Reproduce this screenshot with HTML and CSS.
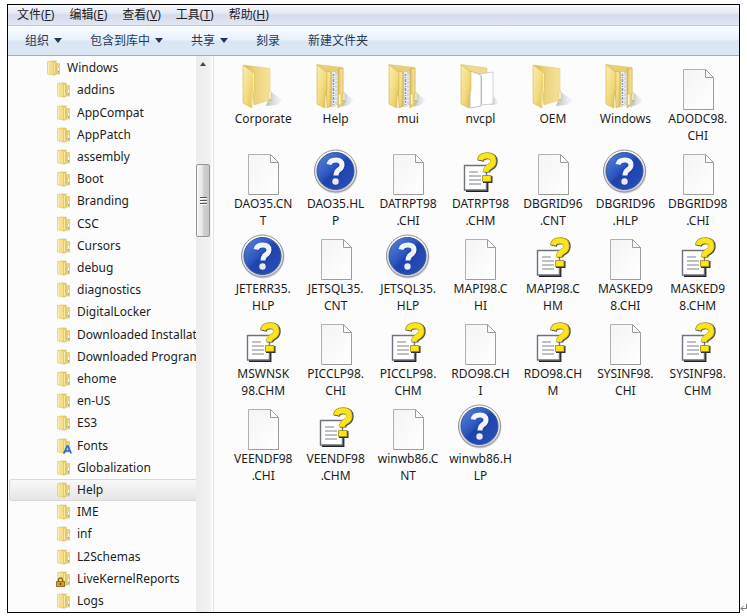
FILE: index.html
```html
<!DOCTYPE html>
<html lang="zh-CN">
<head>
<meta charset="utf-8">
<title>Help</title>
<link rel="stylesheet" href="styles.css">
</head>
<body>
<svg class="defs" aria-hidden="true">
  <defs>
    <linearGradient id="flap" x1="0" y1="0" x2="1" y2="1">
      <stop offset="0" stop-color="#fbefae"/><stop offset=".5" stop-color="#f3dc82"/><stop offset="1" stop-color="#e0bf50"/>
    </linearGradient>
    <linearGradient id="back" x1="0" y1="0" x2="1" y2="0">
      <stop offset="0" stop-color="#d9b957"/><stop offset=".5" stop-color="#ecd481"/><stop offset="1" stop-color="#f6e39a"/>
    </linearGradient>
    <linearGradient id="paper" x1="0" y1="0" x2="1" y2="1">
      <stop offset="0" stop-color="#f4f4f4"/><stop offset="1" stop-color="#ffffff"/>
    </linearGradient>
    <linearGradient id="shade" x1="0" y1="0" x2="1" y2="0">
      <stop offset="0" stop-color="#8c939c" stop-opacity=".6"/><stop offset="1" stop-color="#b0b6be" stop-opacity="0"/>
    </linearGradient>
    <linearGradient id="blue" x1="0" y1="0" x2="1" y2="1">
      <stop offset="0" stop-color="#5f86dc"/><stop offset=".42" stop-color="#2d56c0"/><stop offset=".5" stop-color="#1f43ae"/><stop offset="1" stop-color="#2b50b8"/>
    </linearGradient>
    <linearGradient id="silver" x1="0" y1="0" x2="0" y2="1">
      <stop offset="0" stop-color="#ffffff"/><stop offset="1" stop-color="#c9cdd3"/>
    </linearGradient>
    <symbol id="folder-small" viewBox="0 0 16 16">
      <path d="M8 3.500h5.500V14H8z" fill="#ecd47c" stroke="#d9bd5f" stroke-width=".6"/>
      <path d="M5 1h5.200v13L8 15.500 5 13z" fill="#e9cf70" stroke="#d0b04a" stroke-width=".5"/>
      <path d="M1.500 1.500L6 1l1.500 2v12L1.500 14z" fill="#f3df8c" stroke="#d9bf62" stroke-width=".5"/>
      <path d="M2.500 2.500v11" stroke="#fbf0b5" stroke-width="1"/>
      <path d="M8.500 3v11" stroke="#f8e9a6" stroke-width="1"/>
      <path d="M12.600 8v3" stroke="#fff" stroke-width="1"/>
      <path d="M12.600 11v1.500" stroke="#6fa58c" stroke-width="1"/>
    </symbol>
    <symbol id="folder" viewBox="0 0 48 48">
      <path d="M27 44l5-14 13 9-8 4z" fill="url(#shade)"/>
      <path d="M5 3l26 3.500V38l-16 5z" fill="url(#back)" stroke="#e3cb7b" stroke-width=".5"/>
      <path d="M30 29q2-1 2 1v10l-2 1z" fill="#fffdf0" stroke="#ddc570" stroke-width=".6"/>
      <path d="M31 37v2.500" stroke="#69a8cf" stroke-width="1"/>
      <path d="M4 3l10 7q1 1 1 2v17l-2 2v15L4 41z" fill="url(#flap)" stroke="#d8ba55" stroke-width=".6"/>
      <path d="M14.500 11v18l-1.500 2v14" fill="none" stroke="#fff3bd" stroke-width=".8"/>
    </symbol>
    <symbol id="folder-full" viewBox="0 0 48 48">
      <path d="M29 45l4-14 10 8-7 4z" fill="url(#shade)"/>
      <path d="M5 2.500l26 3V41l-14 4z" fill="#e8ce76" stroke="#dcc06a" stroke-width=".5"/>
      <path d="M14 9l5 1v34l-4 2z" fill="url(#flap)" stroke="#c9aa47" stroke-width=".6"/>
      <path d="M20 9l6 2v31l-6 3z" fill="#eef1f4" stroke="#b8bcc2" stroke-width=".5"/>
      <path d="M21.500 12v31" stroke="#8b97a5" stroke-width="1.400" stroke-dasharray="2 1 1 1 3 1"/>
      <path d="M24 11v32" stroke="#b9c1ca" stroke-width="1" stroke-dasharray="3 1"/>
      <path d="M26 7l5-1v36l-5 4z" fill="url(#back)" stroke="#ceb04d" stroke-width=".6"/>
      <path d="M26.500 32h2.500v10l-2.500 2z" fill="#fff9dc" stroke="#d5b954" stroke-width=".7"/>
      <path d="M31 31q2-1 2 1v8l-2 2z" fill="#fffdf0" stroke="#d5b954" stroke-width=".7"/>
      <path d="M32 38v2.500" stroke="#4f9fd5" stroke-width="1"/>
      <path d="M5 2.500l9 7q1 1 1 2v17l-2 3v14.500L5 42z" fill="url(#flap)" stroke="#cfb04b" stroke-width=".6"/>
    </symbol>
    <symbol id="folder-pages" viewBox="0 0 48 48">
      <path d="M35 43l3-9 5 8z" fill="url(#shade)"/>
      <path d="M5 2.500L31 6v35l-17 4z" fill="#edda8e" stroke="#dcc06a" stroke-width=".5"/>
      <path d="M23 12l14-2v32l-13 1z" fill="#fff" stroke="#bcbfc4" stroke-width=".7"/>
      <path d="M14 9l11 4v31l-11 2z" fill="#fff" stroke="#a9acb1" stroke-width=".7"/>
      <path d="M25.500 14v28" stroke="#b9bcc1" stroke-width="1"/>
      <path d="M5 2.500l9 7q1 1 1 2v17l-2 3v14.500L5 42z" fill="url(#flap)" stroke="#d3b652" stroke-width=".6"/>
    </symbol>
    <symbol id="doc" viewBox="0 0 48 48">
      <path d="M9.500 7.500h22l8 8v32h-30z" fill="url(#paper)" stroke="#b0b0b0" stroke-width="1"/>
      <path d="M10 47.500h29.500v-31" fill="none" stroke="#9c9c9c" stroke-width="1"/>
      <path d="M31.500 7.500v8h8z" fill="#fff" stroke="#9c9c9c" stroke-width="1"/>
    </symbol>
    <symbol id="hlp" viewBox="0 0 48 48">
      <circle cx="24" cy="25" r="21.500" fill="#a4a7ac" opacity=".5"/>
      <circle cx="23.500" cy="24" r="21" fill="url(#silver)" stroke="#8d939d" stroke-width="1"/>
      <circle cx="23.500" cy="24" r="18.500" fill="url(#blue)" stroke="#3a5290" stroke-width="1"/>
      <path d="M18 18q1-4.500 7-4.500 6 0 6 5 0 3-3.500 5-2.500 2-2.500 5.500" fill="none" stroke="#122c78" stroke-width="5" opacity=".4"/>
      <path d="M17 17.500q1-4.500 7-4.500 6 0 6 5 0 3-3.500 5-2.500 2-2.500 5.500" fill="none" stroke="#f3f4f7" stroke-width="5"/>
      <circle cx="23.500" cy="34.500" r="3.200" fill="#e8ebf1"/>
    </symbol>
    <symbol id="chm" viewBox="0 0 48 48">
      <path d="M31.500 30v14H10" fill="none" stroke="#222" stroke-width="1.800"/>
      <path d="M8.500 18.500h22v24.500h-22z" fill="#fff" stroke="#6c7280" stroke-width="1.400"/>
      <path d="M13 25h9M13 29h12M13 33h12M13 37h12" stroke="#7d8490" stroke-width="1.200"/>
      <path d="M24.500 14q1-5 7.500-5 6.500 0 6.500 5.500 0 4-4.500 6-3 2-3 5" fill="none" stroke="#444" stroke-width="6.400"/>
      <path d="M24 13q1-4.500 7-4.500 6.500 0 6.500 5.500 0 4-4.500 6-3 2-3 5" fill="none" stroke="#a8962a" stroke-width="6.400"/>
      <path d="M24.300 13q1-4.300 6.700-4.300 6.300 0 6.300 5.300 0 4-4.500 6-3 2-3 4.800" fill="none" stroke="#fbe41a" stroke-width="5.200"/>
      <path d="M27 29h9.500v7H27z" fill="#333"/>
      <path d="M26.500 28.500h8.500v6h-8.500z" fill="#fbe41a" stroke="#95851b" stroke-width=".8"/>
    </symbol>
    <symbol id="lock" viewBox="0 0 9 10">
      <path d="M2.500 5V3q0-2 2-2t2 2v2" fill="none" stroke="#8a6a1c" stroke-width="1.400"/>
      <path d="M.5 4.500h8v5h-8z" fill="#d69d27" stroke="#7d5b10" stroke-width=".8"/>
      <path d="M4.500 6v2" stroke="#4d3707" stroke-width="1.200"/>
    </symbol>
    <symbol id="font-mark" viewBox="0 0 9 9">
      <path d="M.8 8.500L4.200 1h.8l3.200 7.500M2 6h5" fill="none" stroke="#2469cf" stroke-width="1.700"/>
    </symbol>
  </defs>
</svg>

<main class="window">
  <nav class="menubar" aria-label="菜单">
    <button>文件(<u>F</u>)</button>
    <button>编辑(<u>E</u>)</button>
    <button>查看(<u>V</u>)</button>
    <button>工具(<u>T</u>)</button>
    <button>帮助(<u>H</u>)</button>
  </nav>
  <div class="toolbar">
    <button class="drop">组织</button>
    <button class="drop">包含到库中</button>
    <button class="drop">共享</button>
    <button>刻录</button>
    <button>新建文件夹</button>
  </div>
  <div class="content">
    <ul class="tree">
      <li class="root"><a href="#"><svg><use href="#folder-small"/></svg>Windows</a></li>
      <li><a href="#"><svg><use href="#folder-small"/></svg>addins</a></li>
      <li><a href="#"><svg><use href="#folder-small"/></svg>AppCompat</a></li>
      <li><a href="#"><svg><use href="#folder-small"/></svg>AppPatch</a></li>
      <li><a href="#"><svg><use href="#folder-small"/></svg>assembly</a></li>
      <li><a href="#"><svg><use href="#folder-small"/></svg>Boot</a></li>
      <li><a href="#"><svg><use href="#folder-small"/></svg>Branding</a></li>
      <li><a href="#"><svg><use href="#folder-small"/></svg>CSC</a></li>
      <li><a href="#"><svg><use href="#folder-small"/></svg>Cursors</a></li>
      <li><a href="#"><svg><use href="#folder-small"/></svg>debug</a></li>
      <li><a href="#"><svg><use href="#folder-small"/></svg>diagnostics</a></li>
      <li><a href="#"><svg><use href="#folder-small"/></svg>DigitalLocker</a></li>
      <li><a href="#"><svg><use href="#folder-small"/></svg>Downloaded Installations</a></li>
      <li><a href="#"><svg><use href="#folder-small"/></svg>Downloaded Program Files</a></li>
      <li><a href="#"><svg><use href="#folder-small"/></svg>ehome</a></li>
      <li><a href="#"><svg><use href="#folder-small"/></svg>en-US</a></li>
      <li><a href="#"><svg><use href="#folder-small"/></svg>ES3</a></li>
      <li><a href="#"><svg><use href="#folder-small"/><use href="#font-mark" x="7" y="7" width="9" height="9"/></svg>Fonts</a></li>
      <li><a href="#"><svg><use href="#folder-small"/></svg>Globalization</a></li>
      <li class="selected"><a href="#"><svg><use href="#folder-small"/></svg>Help</a></li>
      <li><a href="#"><svg><use href="#folder-small"/></svg>IME</a></li>
      <li><a href="#"><svg><use href="#folder-small"/></svg>inf</a></li>
      <li><a href="#"><svg><use href="#folder-small"/></svg>L2Schemas</a></li>
      <li><a href="#"><svg><use href="#folder-small"/><use href="#lock" x="0" y="6" width="9" height="10"/></svg>LiveKernelReports</a></li>
      <li><a href="#"><svg><use href="#folder-small"/></svg>Logs</a></li>
    </ul>
    <div class="scrollbar" aria-hidden="true">
      <span class="arrow-up"></span>
      <span class="thumb"><i></i><i></i><i></i></span>
    </div>
    <ul class="files">
      <li><svg><use href="#folder"/></svg><span>Corporate</span></li>
      <li><svg><use href="#folder-full"/></svg><span>Help</span></li>
      <li><svg><use href="#folder-full"/></svg><span>mui</span></li>
      <li><svg><use href="#folder-pages"/></svg><span>nvcpl</span></li>
      <li><svg><use href="#folder"/></svg><span>OEM</span></li>
      <li><svg><use href="#folder-full"/></svg><span>Windows</span></li>
      <li><svg><use href="#doc"/></svg><span>ADODC98.<br>CHI</span></li>
      <li><svg><use href="#doc"/></svg><span>DAO35.CN<br>T</span></li>
      <li><svg><use href="#hlp"/></svg><span>DAO35.HL<br>P</span></li>
      <li><svg><use href="#doc"/></svg><span>DATRPT98<br>.CHI</span></li>
      <li><svg><use href="#chm"/></svg><span>DATRPT98<br>.CHM</span></li>
      <li><svg><use href="#doc"/></svg><span>DBGRID96<br>.CNT</span></li>
      <li><svg><use href="#hlp"/></svg><span>DBGRID96<br>.HLP</span></li>
      <li><svg><use href="#doc"/></svg><span>DBGRID98<br>.CHI</span></li>
      <li><svg><use href="#hlp"/></svg><span>JETERR35.<br>HLP</span></li>
      <li><svg><use href="#doc"/></svg><span>JETSQL35.<br>CNT</span></li>
      <li><svg><use href="#hlp"/></svg><span>JETSQL35.<br>HLP</span></li>
      <li><svg><use href="#doc"/></svg><span>MAPI98.C<br>HI</span></li>
      <li><svg><use href="#chm"/></svg><span>MAPI98.C<br>HM</span></li>
      <li><svg><use href="#doc"/></svg><span>MASKED9<br>8.CHI</span></li>
      <li><svg><use href="#chm"/></svg><span>MASKED9<br>8.CHM</span></li>
      <li><svg><use href="#chm"/></svg><span>MSWNSK<br>98.CHM</span></li>
      <li><svg><use href="#doc"/></svg><span>PICCLP98.<br>CHI</span></li>
      <li><svg><use href="#chm"/></svg><span>PICCLP98.<br>CHM</span></li>
      <li><svg><use href="#doc"/></svg><span>RDO98.CH<br>I</span></li>
      <li><svg><use href="#chm"/></svg><span>RDO98.CH<br>M</span></li>
      <li><svg><use href="#doc"/></svg><span>SYSINF98.<br>CHI</span></li>
      <li><svg><use href="#chm"/></svg><span>SYSINF98.<br>CHM</span></li>
      <li><svg><use href="#doc"/></svg><span>VEENDF98<br>.CHI</span></li>
      <li><svg><use href="#chm"/></svg><span>VEENDF98<br>.CHM</span></li>
      <li><svg><use href="#doc"/></svg><span>winwb86.C<br>NT</span></li>
      <li><svg><use href="#hlp"/></svg><span>winwb86.H<br>LP</span></li>
    </ul>
  </div>
</main>
<svg class="return-mark" viewBox="0 0 7 10" aria-hidden="true"><path d="M6.500 1v4.500H1M3.500 3L1 5.500 3.500 8" fill="none" stroke="#777"/></svg>
</body>
</html>
```

FILE: styles.css
```css
* {
  box-sizing: border-box;
}

body {
  display: flex;
  height: 100vh;
  margin: 0;
  padding: 4px 0 3px 7px;
  background: #fff;
  color: #1c1c1c;
  font: 12px/16px "Noto Sans", "Noto Sans CJK SC", sans-serif;
}

ul {
  margin: 0;
  padding: 0;
  list-style: none;
}

button {
  padding: 0;
  border: 0;
  background: none;
  color: inherit;
  font: inherit;
  white-space: nowrap;
}

a {
  color: inherit;
  text-decoration: none;
}

.defs {
  position: absolute;
  width: 0;
  height: 0;
}

.window {
  display: flex;
  flex: 1;
  flex-direction: column;
  min-width: 0;
  border: 1px solid #000;
  background: #fcfcfc;
}

.return-mark {
  align-self: flex-end;
  width: 7px;
  height: 10px;
}

.menubar {
  display: flex;
  flex: none;
  gap: 15px;
  height: 21px;
  padding: 0 9px;
  border-bottom: 1px solid #c3c9da;
  background: linear-gradient(#f7f8fc, #e6eaf5 40%, #d5dbed 50%, #e1e6f4);
}

.toolbar {
  display: flex;
  flex: none;
  gap: 28px;
  height: 30px;
  padding: 0 17px;
  border-bottom: 1px solid #a0afc3;
  background: linear-gradient(#f9fcff, #e8f1fb 48%, #dbe6f4 52%, #dce7f5);
  color: #1e395b;
}

.drop {
  display: flex;
  align-items: center;
  gap: 5px;
}

.drop::after {
  content: "";
  border: 4px solid transparent;
  border-top: 5px solid #1e395b;
  border-bottom: 0;
}

.content {
  display: flex;
  flex: 1;
  min-height: 0;
}

.tree {
  display: flex;
  flex: 0 0 188px;
  flex-direction: column;
  overflow: hidden;
  padding: 1px 0 0 1px;
}

.tree li {
  flex: 1;
  min-height: 0;
  border: 1px solid transparent;
  border-right: 0;
  padding-left: 46px;
}

.tree .root {
  padding-left: 36px;
}

.tree .selected {
  border-color: #d9d9d9;
  border-radius: 3px 0 0 3px;
  background: linear-gradient(#f9f9f9, #e5e5e5);
}

.tree a {
  display: flex;
  align-items: center;
  gap: 5px;
  height: 100%;
  white-space: nowrap;
}

.tree svg {
  flex: none;
  width: 16px;
  height: 16px;
}

.scrollbar {
  display: flex;
  flex: 0 0 18px;
  flex-direction: column;
  gap: 98px;
  padding: 6px 3px 0 0;
  border-right: 1px solid #dbe6f5;
  background: linear-gradient(90deg, #ececec, #f2f2f2) 0 0 / 15px 100% no-repeat;
}

.arrow-up {
  align-self: center;
  border: 3px solid transparent;
  border-top: 0;
  border-bottom: 4px solid #444;
}

.thumb {
  display: flex;
  flex-direction: column;
  align-items: center;
  justify-content: center;
  gap: 1px;
  height: 73px;
  border: 1px solid #959595;
  border-radius: 2px;
  background: linear-gradient(90deg, #f6f6f6, #e6e6e6 45%, #cfcfcf 55%, #c6c6c6);
}

.thumb i {
  width: 7px;
  height: 2px;
  border-top: 1px solid #555;
  background: #fff;
}

.files {
  display: grid;
  flex: 1;
  grid-template-columns: repeat(7, 1fr);
  grid-auto-rows: 85px;
  min-width: 0;
  padding: 6px 5px 0 13px;
}

.files li {
  display: flex;
  flex-direction: column;
  align-items: center;
  text-align: center;
  line-height: 17px;
}

.files svg {
  flex: none;
  width: 48px;
  height: 48px;
}
```
